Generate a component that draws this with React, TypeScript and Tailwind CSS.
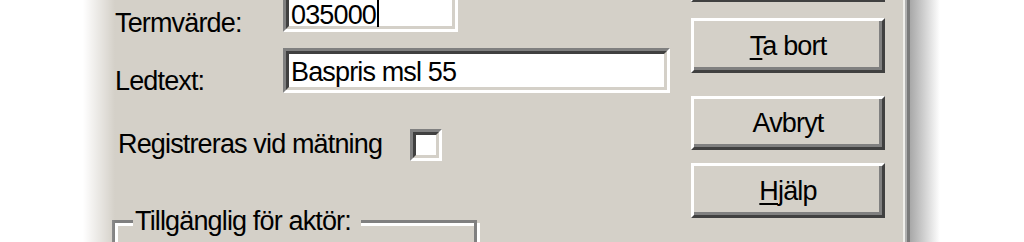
import type { ReactNode } from "react";

const text =
  "font-['Liberation_Sans',Arial,sans-serif] text-[27px] leading-[30px] tracking-[-0.85px] text-black";

// Classic Win32 sunken edit/checkbox frame
function Sunken({
  className,
  innerClass,
  children,
}: {
  className?: string;
  innerClass?: string;
  children?: ReactNode;
}) {
  return (
    <div
      className={`border-[3px] border-t-[#808080] border-l-[#808080] border-r-white border-b-white ${className ?? ""}`}
    >
      <div
        className={`h-full border-[3px] border-t-[#404040] border-l-[#404040] border-r-[#d4d0c8] border-b-[#d4d0c8] bg-white ${innerClass ?? ""}`}
      >
        {children}
      </div>
    </div>
  );
}

function Button({ className, children }: { className?: string; children?: ReactNode }) {
  return (
    <div
      className={`flex items-center justify-center border-[3px] border-t-white border-l-white border-r-[#404040] border-b-[#404040] shadow-[inset_-3px_-3px_0_#808080] ${className ?? ""}`}
    >
      {children && <span className={text}>{children}</span>}
    </div>
  );
}

export default function App() {
  return (
    <div className="relative flex h-[242px] w-full overflow-hidden bg-white">
      <div className="w-[83px] shrink-0" />

      {/* Dialog body */}
      <div className="flex h-full w-[820px] shrink-0 items-start bg-[#d4d0c8] pl-[32px]">
        {/* Fields */}
        <div className="flex w-[555px] flex-col">
          <div className="-mt-[13px] flex h-[45px]">
            <div className={`w-[168px] pt-[21px] ${text}`}>Termvärde:</div>
            <Sunken className="h-[45px] w-[175px]" innerClass="pl-[2px] pt-[7px]">
              <span className={text}>
                035000
                <span className="ml-[1px] inline-block h-[27px] w-[2px] bg-black align-top" />
              </span>
            </Sunken>
          </div>

          <div className="mt-[16px] flex h-[45px]">
            <div className={`w-[168px] pt-[18px] ${text}`}>Ledtext:</div>
            <Sunken className="h-[45px] w-[387px]" innerClass="pl-[2px] pt-[3px]">
              <span className={text}>Baspris msl 55</span>
            </Sunken>
          </div>

          <div className="mt-[36px] flex items-start">
            <div className={`w-[295px] pl-[3px] ${text}`}>Registreras vid mätning</div>
            <Sunken className="h-[32px] w-[32px]" />
          </div>

          <fieldset className="mt-[45px] -ml-[3px] h-[60px] w-[365px] min-w-0 border-[3px] border-[#808080] px-[18px] shadow-[inset_3px_3px_0_white,3px_3px_0_white]">
            <legend className={`bg-[#d4d0c8] pl-[2px] pr-[10px] ${text}`}>
              Tillgänglig för aktör:
            </legend>
          </fieldset>
        </div>

        {/* Buttons (the first one is cut off by the top edge) */}
        <div className="ml-[21px] flex w-[194px] flex-col">
          <Button className="-mt-[53px] h-[55px]" />
          <Button className="mt-[16px] h-[55px]">
            <span className="underline decoration-2 underline-offset-[3px]">T</span>a bort
          </Button>
          <Button className="mt-[23px] h-[54px]">Avbryt</Button>
          <Button className="mt-[13px] h-[55px]">
            <span className="underline decoration-2 underline-offset-[3px]">H</span>jälp
          </Button>
        </div>
      </div>

      {/* Window frame edge and drop shadow */}
      <div className="h-full w-[2px] shrink-0 bg-[#f0efeb]" />
      <div className="h-full w-[2px] shrink-0 bg-[#b0b0b0]" />
      <div className="h-full w-[3px] shrink-0 bg-[#7a7a7a]" />
      <div className="h-full w-[30px] shrink-0 bg-linear-to-r from-[#a8a8a8] to-white" />
      <div className="flex-1" />

      {/* fade on the left edge of the screenshot */}
      <div className="pointer-events-none absolute left-[83px] top-0 h-full w-[32px] bg-linear-to-r from-white to-transparent" />
    </div>
  );
}
